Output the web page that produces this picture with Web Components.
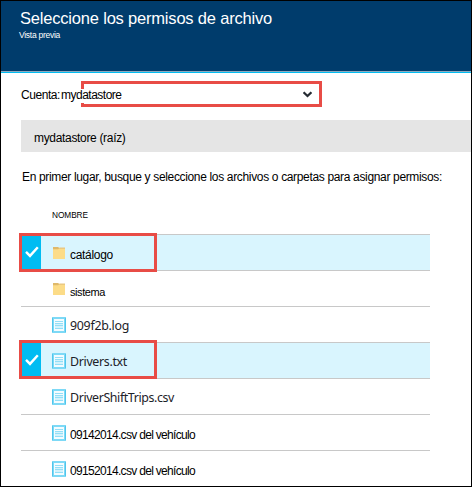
<!DOCTYPE html>
<html lang="es">
<head>
<meta charset="utf-8">
<title>Seleccione los permisos de archivo</title>
<style>
html,body{margin:0;padding:0}
body{width:472px;height:487px;overflow:hidden;background:#fff;font-family:"Liberation Sans",Arial,sans-serif}
</style>
</head>
<body>
<permission-blade></permission-blade>
<script>
// One line of text; "width" sets the advance the line is tracked to.
class TextLine extends HTMLElement{
  connectedCallback(){
    const root=this.attachShadow({mode:'open'});
    root.innerHTML=`<style>
      :host{display:block;white-space:nowrap;line-height:16px;height:16px}
      span{display:inline-block}
    </style><span><slot></slot></span>`;
    const w=parseFloat(this.getAttribute('width'));
    const span=root.querySelector('span');
    const n=this.textContent.length;
    if(w) span.style.letterSpacing=((w-span.getBoundingClientRect().width)/n).toFixed(3)+'px';
  }
}
class BladeHeader extends HTMLElement{
  connectedCallback(){
    this.attachShadow({mode:'open'}).innerHTML=`<style>
      :host{display:block;box-sizing:border-box;height:72px;padding:9px 0 0 19px;background:#003c6c;color:#fff;border-bottom:1px solid #00bcf2;box-shadow:inset 0 -1px #8fa9bd}
      .t{font-size:16.5px}
      .s{font-size:8.5px;margin:1px 0 0 -1px}
    </style><text-line class="t" width="252">Seleccione los permisos de archivo</text-line>
    <text-line class="s" width="41">Vista previa</text-line>`;
  }
}
class AccountPicker extends HTMLElement{
  connectedCallback(){
    this.attachShadow({mode:'open'}).innerHTML=`<style>
      :host{display:flex;height:26px;font-size:12px;color:#000}
      .l{width:60px;padding-top:6px;box-sizing:border-box;flex:none}
      .box{width:241px;height:26px;box-sizing:border-box;border:3px solid #e84c46;display:flex;align-items:flex-start;justify-content:space-between}
      .v{background:#fff;height:14px;line-height:12px;margin:5px 0 0 -23px}
      svg{margin:7px 7px 0 0}
    </style><text-line class="l" width="39">Cuenta:</text-line>
    <div class="box"><text-line class="v" width="60.5">mydatastore</text-line>
    <svg width="9" height="7" viewBox="0 0 9 7"><path d="M.6 1.2 4.5 5 8.4 1.2" fill="none" stroke="#252b33" stroke-width="2.2"/></svg></div>`;
  }
}
class FileIcon extends HTMLElement{
  connectedCallback(){
    const folder=this.getAttribute('kind')==='folder';
    this.attachShadow({mode:'open'}).innerHTML=`<style>:host{display:block;width:14px;height:16px}svg{display:block}</style>`+(folder?
    `<svg width="14" height="16" viewBox="0 0 14 16"><path d="M1 2h5l1.5 1H13v11H1z" fill="#dfb96b"/><path d="M1 4.2h5.2l1-1H13V14H1z" fill="#fcdc88"/><path d="M7.5 2.6H13v1.1H7z" fill="#e8c681"/></svg>`:
    `<svg width="14" height="16" viewBox="0 0 14 16"><path d="M0 0h14v16H0z" fill="#7dd9f6"/><path d="M0 1h1v14H0zM13 1h1v14h-1z" fill="#50c6ec"/><path d="M2 2h10v12H2z" fill="#f4fcff"/><path d="M3 6h8v6H3z" fill="#d3f2fc"/><path d="M3 4.5h8M3 6.5h8M3 8.5h8M3 11.5h8" stroke="#93dff7"/></svg>`);
  }
}
class FileRow extends HTMLElement{
  connectedCallback(){
    const on=this.hasAttribute('selected'), kind=this.getAttribute('kind');
    const segoe=this.hasAttribute('native');
    this.attachShadow({mode:'open'}).innerHTML=`<style>
      :host{display:flex;position:relative;box-sizing:border-box;width:409px;height:36px;border-top:1px solid #c8c8c8;background:${on?'#d9f5fe':'#fff'};color:${segoe?'#1c2128':'#000'};font:${segoe?'12.4px "Noto Sans"':'var(--size,12px) "Liberation Sans"'},sans-serif}
      .c{width:20px;height:35px;flex:none;background:${on?'#00bcf2':'transparent'}}
      .c svg{display:block;margin:11px 0 0 4px}
      file-icon{margin:10px 4px 0 11px}
      text-line{margin-top:var(--drop,12px)}
      .ring{position:absolute;left:-2px;top:var(--ring-top,-2px);width:138px;height:39px;box-sizing:border-box;border:3px solid #e84c46;z-index:1}
    </style><div class="c">${on?'<svg width="14" height="12" viewBox="0 0 14 12"><path d="M1 5.8 5 9.9 12.8 1.2" fill="none" stroke="#fff" stroke-width="2.4"/></svg>':''}</div>
    <file-icon kind="${kind}"></file-icon>
    <text-line width="${this.getAttribute('width')}">${this.getAttribute('name')}</text-line>
    ${on?'<div class="ring"></div>':''}`;
  }
}
class PermissionBlade extends HTMLElement{
  connectedCallback(){
    this.attachShadow({mode:'open'}).innerHTML=`<style>
      :host{display:block;box-sizing:border-box;width:472px;height:487px;border:1px solid #000;overflow:hidden;background:#fff;color:#000;font-size:12px}
      main{padding:8px 0 0 20px}
      .path{margin-top:13px;height:32px;background:#e5e5e5;padding:10px 0 0 13px;box-sizing:border-box}
      .hint{margin:17px 0 0 1px}
      .head{font-size:8.3px;margin:22px 0 0 31px;height:27px}
    </style><blade-header></blade-header>
    <main><account-picker></account-picker>
    <div class="path"><text-line width="91.5">mydatastore (raíz)</text-line></div>
    <text-line class="hint" width="420">En primer lugar, busque y seleccione los archivos o carpetas para asignar permisos:</text-line>
    <text-line class="head" width="36">NOMBRE</text-line>
    <file-row kind="folder" name="catálogo" width="43" selected></file-row>
    <file-row kind="folder" name="sistema" width="35" style="--drop:13px;--size:11px"></file-row>
    <file-row kind="file" name="909f2b.log" width="59" native style="--drop:11px"></file-row>
    <file-row kind="file" name="Drivers.txt" width="57" native selected style="--drop:11px;--ring-top:-3px"></file-row>
    <file-row kind="file" name="DriverShiftTrips.csv" width="104" native style="--drop:11px"></file-row>
    <file-row kind="file" name="09142014.csv del vehículo" width="125"></file-row>
    <file-row kind="file" name="09152014.csv del vehículo" width="125"></file-row>
    </main>`;
  }
}
customElements.define('text-line',TextLine);
customElements.define('file-icon',FileIcon);
customElements.define('blade-header',BladeHeader);
customElements.define('account-picker',AccountPicker);
customElements.define('file-row',FileRow);
customElements.define('permission-blade',PermissionBlade);
</script>
</body>
</html>
